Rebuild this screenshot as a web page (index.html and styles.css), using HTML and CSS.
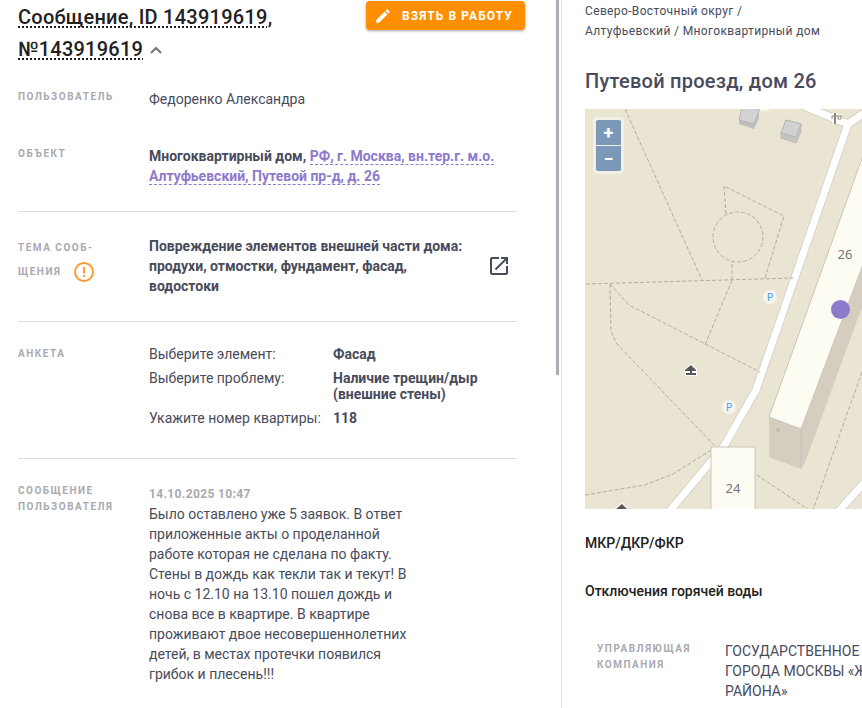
FILE: index.html
```html
<!DOCTYPE html>
<html lang="ru">
<head>
    <meta charset="UTF-8">
    <meta name="viewport" content="width=device-width, initial-scale=1.0">
    <title>Сообщение 143919619</title>
    <link rel="stylesheet" href="styles.css">
</head>
<body>
    <div class="page">
        <main class="message">
            <header class="message-header">
                <h1><span class="dotted">Сообщение, ID 143919619</span>, <span class="dotted">№143919619</span>
                    <button class="icon-btn" type="button" aria-label="Свернуть">
                        <svg width="12" height="10" viewBox="0 0 12 10"><path d="M1 7l5-5 5 5" fill="none" stroke="#757575" stroke-width="2"/></svg>
                    </button>
                </h1>
                <button class="take-btn" type="button">
                    <svg width="18" height="18" viewBox="0 0 24 24"><path fill="#fff" d="M3 17.25V21h3.75L17.81 9.94l-3.75-3.75L3 17.25zM20.71 7.04a1 1 0 0 0 0-1.41l-2.34-2.34a1 1 0 0 0-1.41 0l-1.83 1.83 3.75 3.75 1.83-1.83z"/></svg>
                    Взять в работу
                </button>
            </header>

            <section class="row row-user">
                <h2 class="label">Пользователь</h2>
                <div class="value">Федоренко Александра</div>
            </section>

            <section class="row row-line">
                <h2 class="label">Объект</h2>
                <div class="value strong">Многоквартирный дом, <a href="#">РФ, г. Москва, вн.тер.г. м.о. Алтуфьевский, Путевой пр-д, д. 26</a></div>
            </section>

            <section class="row row-line row-theme">
                <h2 class="label">Тема сооб-<br>щения
                    <svg class="warn" width="22" height="22" viewBox="0 0 22 22"><circle cx="11" cy="11" r="9" fill="none" stroke="#ff9a2e" stroke-width="2"/><path d="M11 6v6.500M11 14v2" stroke="#ff9a2e" stroke-width="2"/></svg>
                </h2>
                <div class="value strong">Повреждение элементов внешней части дома: продухи, отмостки, фундамент, фасад, водостоки</div>
                <a class="open-link" href="#" aria-label="Открыть">
                    <svg width="24" height="24" viewBox="0 0 24 24"><path fill="#484b5b" d="M19 19H5V5h7V3H5a2 2 0 0 0-2 2v14a2 2 0 0 0 2 2h14c1.100 0 2-.9 2-2v-7h-2v7zM14 3v2h3.590l-9.830 9.830 1.410 1.410L19 6.410V10h2V3h-7z"/></svg>
                </a>
            </section>

            <section class="row row-line row-survey">
                <h2 class="label">Анкета</h2>
                <dl class="survey">
                    <dt>Выберите элемент:</dt>
                    <dd>Фасад</dd>
                    <dt>Выберите проблему:</dt>
                    <dd>Наличие трещин/дыр (внешние стены)</dd>
                    <dt>Укажите номер квартиры:</dt>
                    <dd>118</dd>
                </dl>
            </section>

            <section class="row">
                <h2 class="label">Сообщение пользователя</h2>
                <div class="value">
                    <time class="date" datetime="2025-10-14T10:47">14.10.2025 10:47</time>
                    <p class="text">Было оставлено уже 5 заявок. В ответ приложенные акты о проделанной работе которая не сделана по факту. Стены в дождь как текли так и текут! В ночь с 12.10 на 13.10 пошел дождь и снова все в квартире. В квартире проживают двое несовершеннолетних детей, в местах протечки появился грибок и плесень!!!</p>
                </div>
            </section>
            <div class="scroll-thumb"></div>
        </main>

        <aside class="object">
            <nav class="crumbs">Северо-Восточный округ /<br>Алтуфьевский / Многоквартирный дом</nav>
            <h2 class="object-title">Путевой проезд, дом 26</h2>

            <div class="map">
                <svg class="map-canvas" viewBox="0 0 277 400" preserveAspectRatio="xMinYMin slice">
                    <rect width="277" height="400" fill="#eae5d2"/>
                    <!-- дороги -->
                    <g fill="none" stroke-linejoin="round">
                        <path d="M216 -4L263 15L279 4M263 15L171 281L139 337L83 404M252 404L280 373" stroke="#d6d3cb" stroke-width="9"/>
                        <path d="M216 -4L263 15L279 4M263 15L171 281L139 337L83 404M252 404L280 373" stroke="#fff" stroke-width="7"/>
                    </g>
                    <!-- тропинки -->
                    <g fill="none" stroke="#b0ae98" stroke-width="1" stroke-dasharray="4 2">
                        <path d="M40 0L117 171M1 175L208 169M25 175L26 222L31 234L131 338L88 365L60 376L0 386"/>
                        <path d="M25 175L44 196L175 263M147 171V153M147 171L120 236"/>
                        <path d="M141 105L139 77L199 107L180 169M172 366L224 401M277 263L228 401"/>
                        <circle cx="153" cy="128" r="25"/>
                    </g>
                    <!-- дома -->
                    <g stroke-linejoin="round">
                        <path d="M184 308V348L216 360L280 182V70z" fill="#d6cdc1"/>
                        <path d="M184 308L280 41V150L216 320z" fill="#fcfcf2" stroke="#cbc5b7"/>
                        <path d="M280 150L216 320L218 359L280 190z" fill="#d6cdc1"/>
                        <path d="M216 320V359" stroke="#c8c0b5"/>
                        <circle cx="193" cy="321" r="2" fill="#c2bbb0"/>
                        <rect x="126" y="338" width="44" height="70" rx="1" fill="#fcfcf2" stroke="#cbc5b7"/>
                        <path d="M157 -2L154 11V15L169 20L174 9V-2z" fill="#bdbdbd"/>
                        <path d="M157 -2L154 11L169 15L174 2V-2z" fill="#d2d2d2" stroke="#b6b6b6"/>
                        <path d="M201 11L196 24V29L211 34L216 23V15z" fill="#c4c4c4" stroke="#bdbdbd"/>
                        <path d="M201 11L216 15L211 28L196 24z" fill="#d2d2d2" stroke="#b6b6b6"/>
                    </g>
                    <ellipse cx="180" cy="0" rx="5" ry="2" fill="#f7f5ee"/>
                    <!-- значки -->
                    <path d="M250 4V15M247 8H257" stroke="#fff" stroke-width="5"/>
                    <path d="M250 4V15" stroke="#90847a" stroke-width="2"/>
                    <path d="M247 7H257M247 7V10M253 7V10H256V7" fill="none" stroke="#90847a"/>
                    <g fill="#555" stroke="#fff" stroke-width="2" paint-order="stroke">
                        <path d="M100 261L106 256L111 261V262H107V264H111V266H101V264H105V262H100z"/>
                        <path d="M31 400L37 395L42 400z"/>
                    </g>
                    <g fill="#f5f4ee">
                        <circle cx="185" cy="188" r="7"/>
                        <circle cx="144" cy="298" r="7"/>
                    </g>
                    <g class="map-parking">
                        <text x="185" y="192">P</text>
                        <text x="144" y="302">P</text>
                    </g>
                    <g class="map-number">
                        <text x="260" y="150">26</text>
                        <text x="148" y="384">24</text>
                    </g>
                    <circle cx="255.500" cy="200.500" r="9.500" fill="#8d7acb"/>
                </svg>
                <div class="zoom">
                    <button type="button" aria-label="Приблизить">+</button>
                    <button type="button" aria-label="Отдалить">−</button>
                </div>
            </div>

            <h3 class="object-subtitle">МКР/ДКР/ФКР</h3>
            <h3 class="object-subtitle">Отключения горячей воды</h3>

            <section class="company">
                <h4 class="label">Управляющая компания</h4>
                <div class="company-name">ГОСУДАРСТВЕННОЕ Б<br>ГОРОДА МОСКВЫ «Ж<br>РАЙОНА»</div>
            </section>
        </aside>
    </div>
</body>
</html>
```
FILE: styles.css
```css
* {
    box-sizing: border-box;
}
body {
    margin: 0;
    font-family: Roboto, "Noto Sans", sans-serif;
    font-size: 14px;
    line-height: 20px;
    color: #484b5b;
    background-color: #fff;
}
h1, h2, h3, h4, p, dl, dd {
    margin: 0;
}
button {
    font-family: inherit;
    border: none;
    cursor: pointer;
}
.page {
    display: flex;
    height: 100vh;
    overflow: hidden;
}

/* Левая колонка */
.message {
    position: relative;
    flex: 0 0 562px;
    padding: 1px 44px 0 18px;
    border-right: 1px solid #dedede;
    overflow: hidden;
}
.scroll-thumb {
    position: absolute;
    top: 0;
    right: 2px;
    width: 3px;
    height: 375px;
    background-color: #adacb3;
}
.message-header {
    display: flex;
    justify-content: space-between;
    align-items: flex-start;
    margin-right: -8px;
}
h1 {
    width: 280px;
    font-size: 20px;
    font-weight: 500;
    line-height: 32px;
    letter-spacing: 0.0125em;
    color: #212121;
}
.dotted {
    text-decoration: underline dotted 2px;
    text-decoration-skip-ink: none;
    text-underline-offset: 2px;
}
.icon-btn {
    margin-left: 2px;
    padding: 0;
    background: none;
}
.take-btn {
    display: flex;
    align-items: center;
    gap: 10px;
    height: 29px;
    padding: 0 12px 0 8px;
    border-radius: 4px;
    background-color: #ff8f00;
    box-shadow: 0 1px 3px rgba(0,0,0,0.35);
    color: #fff;
    font-size: 12px;
    font-weight: 700;
    letter-spacing: 0.09em;
    text-transform: uppercase;
    white-space: nowrap;
}
.row {
    display: grid;
    grid-template-columns: 131px 1fr auto;
    padding: 24px 0 25px;
}
.row-user {
    padding-bottom: 13px;
}
.row-line {
    border-bottom: 1px solid #dedede;
}
.label {
    font-size: 10px;
    font-weight: 700;
    line-height: 16px;
    letter-spacing: 0.15em;
    text-transform: uppercase;
    color: #a9a9b0;
}
.strong {
    font-weight: 700;
}
.value a {
    color: #8d7acb;
    text-decoration: none;
    border-bottom: 1px dashed #8d7acb;
}
.row-theme .label {
    line-height: 24px;
}
.row-theme .value {
    max-width: 328px;
}
.warn {
    margin-left: 8px;
    vertical-align: middle;
}
.open-link {
    display: flex;
    align-items: center;
    padding-right: 6px;
}
.row-survey {
    padding-bottom: 32px;
}
.survey {
    display: grid;
    grid-template-columns: 176px 150px;
    gap: 8px;
    line-height: 16px;
}
.survey dd {
    font-weight: 700;
}
.date {
    font-size: 12px;
    font-weight: 700;
    letter-spacing: 0.03em;
    color: #a9a9b0;
}
.text {
    max-width: 264px;
}

/* Правая колонка */
.object {
    flex: 1;
    min-width: 0;
    padding: 1px 0 0 23px;
    overflow: hidden;
}
.crumbs {
    font-size: 12px;
    letter-spacing: 0.03em;
    white-space: nowrap;
}
.object-title {
    margin: 24px 0 12px;
    font-size: 20px;
    font-weight: 500;
    line-height: 32px;
    letter-spacing: 0.0125em;
    white-space: nowrap;
}
.map {
    position: relative;
    height: 400px;
    margin-bottom: 24px;
    overflow: hidden;
}
.map-canvas {
    display: block;
    width: 100%;
    height: 100%;
}
.map-number {
    font-family: "Noto Sans", sans-serif;
    font-size: 13px;
    fill: #777;
    text-anchor: middle;
}
.map-parking {
    font-family: "Noto Sans", sans-serif;
    font-size: 11px;
    fill: #4aa5ea;
    text-anchor: middle;
}
.zoom {
    position: absolute;
    top: 8px;
    left: 8px;
    display: grid;
    gap: 1px;
    padding: 3px;
    border-radius: 4px;
    background-color: rgba(255,255,255,0.4);
}
.zoom button {
    width: 25px;
    height: 25px;
    padding: 0;
    background-color: #7b98b8;
    color: #fff;
    font-size: 18px;
    font-weight: 700;
    line-height: 24px;
}
.zoom button:first-child {
    border-radius: 2px 2px 0 0;
}
.zoom button:last-child {
    border-radius: 0 0 2px 2px;
}
.object-subtitle {
    margin-bottom: 28px;
    font-size: 14px;
    font-weight: 500;
    line-height: 20px;
    color: #212121;
}
.company {
    display: grid;
    grid-template-columns: 128px 1fr;
    padding: 12px 0 0 12px;
}
.company-name {
    white-space: nowrap;
}
```
